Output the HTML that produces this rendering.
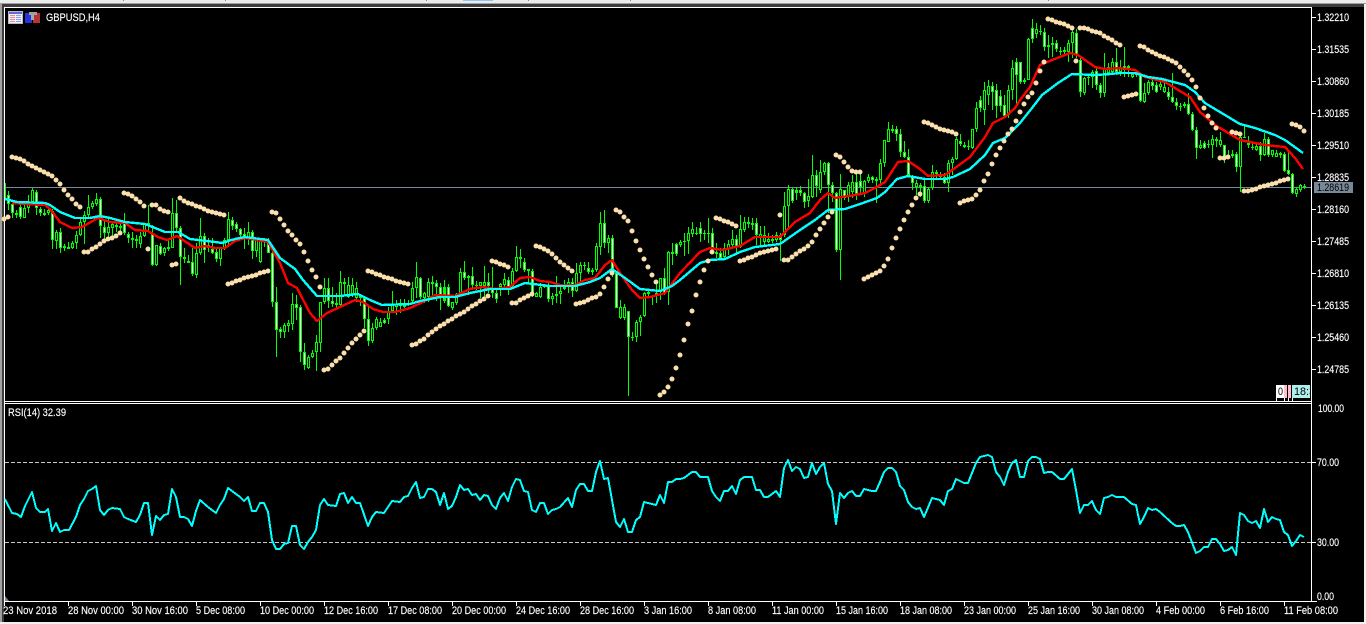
<!DOCTYPE html>
<html>
<head>
<meta charset="utf-8">
<title>GBPUSD,H4</title>
<style>
html,body{margin:0;padding:0;background:#f0f0f0;width:1366px;height:624px;overflow:hidden}
svg{display:block;position:absolute;left:0;top:0}
text{font-family:"Liberation Sans",sans-serif;font-size:11px;fill:#fff;stroke:#fff;stroke-width:.15}
</style>
</head>
<body>
<svg width="1366" height="624" viewBox="0 0 1366 624" xmlns="http://www.w3.org/2000/svg">
<rect x="0" y="0" width="1366" height="624" fill="#f0f0f0"/>
<rect x="0" y="0" width="1366" height="3" fill="#ececec"/>
<rect x="463" y="0" width="30" height="1" fill="#8bc4f5"/>
<g fill="#8a8a8a"><rect x="123" y="0" width="1" height="1"/><rect x="225" y="0" width="1" height="1"/><rect x="426" y="0" width="1" height="1"/><rect x="528" y="0" width="1" height="1"/><rect x="630" y="0" width="1" height="1"/><rect x="1048" y="0" width="1" height="1"/></g>
<rect x="0" y="3" width="1366" height="1" fill="#a0a0a0"/>
<rect x="0" y="4" width="2" height="618" fill="#a0a0a0"/>
<rect x="2" y="4" width="1362" height="3" fill="#3c3c3c"/>
<rect x="2" y="4" width="2" height="618" fill="#3c3c3c"/>
<rect x="4" y="7" width="1360" height="615" fill="#000"/>
<rect x="4" y="7" width="1308" height="1" fill="#fff"/>
<rect x="4" y="7" width="1" height="594" fill="#fff"/>
<rect x="1311" y="7" width="1" height="595" fill="#fff"/>
<rect x="4" y="401" width="1308" height="1" fill="#fff"/>
<rect x="4" y="403" width="1308" height="1" fill="#fff"/>
<rect x="4" y="601" width="1313" height="1" fill="#fff"/>

<!-- icons -->
<rect x="8" y="11" width="15" height="13" fill="#b8b8c8"/>
<rect x="9" y="12" width="13" height="2" fill="#5a6fd0"/>
<rect x="9" y="14" width="13" height="9" fill="#f0f0f8"/>
<g fill="#e88c8c"><rect x="10" y="15" width="5" height="1"/><rect x="10" y="17" width="5" height="1"/><rect x="10" y="19" width="5" height="1"/><rect x="10" y="21" width="5" height="1"/></g>
<g fill="#8c9fe8"><rect x="16" y="15" width="5" height="1"/><rect x="16" y="17" width="5" height="1"/><rect x="16" y="19" width="5" height="1"/><rect x="16" y="21" width="5" height="1"/></g>
<rect x="25" y="13" width="7" height="10" fill="#2434d8"/>
<rect x="33" y="13" width="7" height="10" fill="#b83434"/>
<rect x="29" y="12" width="8" height="3" fill="#a0a0a0"/>
<rect x="31" y="15" width="3" height="5" fill="#a8a8a8"/>
<text x="46" y="21" textLength="54" lengthAdjust="spacingAndGlyphs">GBPUSD,H4</text>
<text x="8" y="416" textLength="58" lengthAdjust="spacingAndGlyphs">RSI(14) 32.39</text>

<!-- current price line -->
<rect x="5" y="187" width="1306" height="1" fill="#778899"/>

<!-- candles -->
<g transform="translate(.5 0)" fill="none" stroke-linecap="butt">
<path stroke="#00ff00" stroke-width="1" d="M5 183V200M8 191V210M12 203V218M16 210V218M20 205V219M24 201V218M28 195V213M32 188V203M36 190V215M40 207V216M44 209V216M48 207V215M52 209V249M56 230V249M60 228V253M64 244V251M68 242V249M72 241V249M76 231V249M80 217V236M84 211V244M88 195V217M92 201V209M96 193V206M100 197V238M104 220V240M108 219V239M112 222V237M116 223V232M120 222V232M124 213V235M128 232V243M132 232V248M136 235V248M140 232V248M144 223V237M148 205V230M152 225V266M156 245V266M160 243V255M164 247V256M168 240V251M172 198V248M176 200V233M180 226V285M184 248V263M188 255V263M192 248V276M196 243V278M200 218V255M204 233V263M208 238V252M212 238V254M216 247V262M220 248V266M224 238V250M228 212V245M232 217V230M236 222V232M240 228V237M244 228V249M248 222V245M252 230V259M256 239V257M260 241V263M264 238V247M268 238V253M272 252V307M276 287V357M280 327V338M284 323V338M288 320V332M292 293V330M296 295V320M300 305V362M304 343V370M308 355V369M312 350V358M316 335V371M320 302V352M324 278V304M328 278V308M332 287V307M336 293V308M340 271V308M344 278V295M348 277V298M352 278V297M356 282V302M360 295V306M364 297V328M368 306V346M372 323V343M376 317V330M380 318V327M384 318V324M388 307V324M392 291V312M396 300V315M400 299V313M404 299V308M408 300V306M412 282V302M416 262V298M420 277V299M424 292V303M428 278V302M432 276V295M436 280V301M440 283V310M444 280V303M448 284V307M452 302V310M456 293V305M460 268V295M464 261V280M468 275V295M472 267V288M476 281V290M480 282V298M484 266V297M488 273V293M492 267V298M496 290V303M500 283V296M504 273V288M508 277V295M512 268V287M516 246V272M520 249V268M524 258V272M528 269V283M532 269V297M536 292V297M540 283V298M544 284V288M548 282V302M552 293V305M556 276V303M560 287V304M564 280V290M568 278V293M572 278V297M576 263V292M580 262V282M584 262V270M588 262V274M592 268V275M596 243V272M600 212V255M604 210V248M608 235V253M612 235V277M616 272V308M620 300V319M624 304V320M628 311V396M632 332V341M636 320V342M640 315V336M644 292V317M648 290V297M652 295V305M656 280V303M660 278V300M664 268V295M668 251V305M672 243V265M676 243V256M680 240V247M684 233V256M688 227V254M692 222V237M696 227V235M700 222V242M704 230V240M708 218V243M712 228V250M716 243V258M720 248V259M724 243V259M728 240V255M732 230V248M736 235V255M740 215V248M744 217V232M748 217V228M752 218V230M756 218V245M760 226V247M764 226V247M768 233V243M772 235V243M776 232V242M780 233V261M784 192V237M788 185V230M792 187V203M796 187V200M800 186V196M804 192V208M808 179V207M812 155V198M816 170V197M820 160V193M824 162V175M828 162V213M832 182V202M836 192V252M840 174V280M844 190V200M848 182V202M852 175V198M856 173V200M860 173V195M864 180V197M868 174V183M872 176V183M876 177V203M880 159V185M884 140V167M888 122V142M892 125V133M896 126V141M900 129V157M904 141V158M908 149V175M912 175V190M916 180V195M920 183V197M924 180V203M928 187V203M932 165V190M936 170V178M940 172V180M944 173V184M948 160V192M952 157V175M956 137V160M960 134V146M964 142V148M968 140V150M972 129V149M976 102V132M980 96V112M984 82V125M988 80V105M992 82V110M996 84V118M1000 90V112M1004 95V118M1008 85V118M1012 60V100M1016 58V105M1020 62V84M1024 78V84M1028 38V80M1032 19V43M1036 23V38M1040 25V35M1044 28V51M1048 35V58M1052 37V57M1056 40V52M1060 47V55M1064 47V55M1068 40V62M1072 28V58M1076 29V58M1080 58V97M1084 77V95M1088 75V85M1092 70V88M1096 68V90M1100 83V98M1104 53V97M1108 63V75M1112 58V75M1116 48V75M1120 60V76M1124 47V77M1128 65V77M1132 72V78M1136 72V77M1140 74V102M1144 83V103M1148 80V95M1152 80V90M1156 82V93M1160 80V90M1164 82V93M1168 87V100M1172 73V103M1176 98V110M1180 103V111M1184 102V108M1188 93V115M1192 112V131M1196 127V159M1200 140V149M1204 141V149M1208 140V148M1212 135V158M1216 137V147M1220 132V147M1224 145V163M1228 150V157M1232 150V158M1236 152V172M1240 135V192M1244 126V138M1248 136V148M1252 143V150M1256 143V151M1260 142V161M1264 133V156M1268 137V157M1272 150V157M1276 150V157M1280 152V158M1284 152V172M1288 152V175M1292 173V194M1296 187V197M1300 184V192M1304 184V189"/>
<path stroke="#00ff00" stroke-width="3" d="M8 195V204M12 204V213M16 213V215M20 207V217M24 208V218M28 202V208M32 190V202M36 192V208M40 209V213M44 213V215M48 210V213M52 211V240M56 232V241M60 232V248M64 246V248M68 247V249M72 243V248M76 235V243M80 222V235M84 215V222M88 207V215M92 203V207M96 199V204M100 199V226M104 227V233M108 227V233M112 224V228M116 225V227M120 226V228M124 223V233M128 234V238M132 238V240M136 239V241M140 236V244M144 224V236M148 223V225M152 233V265M156 245V265M160 246V254M164 248V253M168 247V249M172 213V248M176 213V228M180 228V257M184 257V259M188 261V263M192 262V274M196 253V275M200 236V253M204 236V250M208 245V248M212 249V253M216 252V259M220 248V259M224 240V248M228 219V240M232 220V226M236 224V229M240 229V235M244 234V237M248 232V238M252 232V251M256 240V251M260 241V262M264 239V241M268 242V253M272 253V302M276 302V330M280 329V332M284 325V332M288 323V326M292 304V324M296 304V308M300 307V352M304 352V365M308 357V368M312 353V357M316 342V352M320 302V343M324 288V302M328 288V301M332 301V304M336 303V305M340 282V305M344 282V284M348 285V297M352 285V294M356 288V298M360 296V298M364 298V319M368 319V341M372 328V341M376 319V328M380 322V327M384 320V323M388 312V319M392 304V311M396 304V307M400 304V306M404 305V307M408 303V305M412 288V301M416 277V288M420 278V297M424 293V298M428 282V297M432 282V284M436 283V287M440 287V297M444 287V301M448 287V306M452 302V308M456 294V303M460 272V293M464 272V278M468 276V278M472 276V285M476 285V286M480 282V286M484 282V286M488 282V286M492 289V293M496 293V299M500 284V287M504 279V285M508 280V287M512 271V286M516 257V271M520 257V259M524 262V270M528 269V271M532 271V293M536 293V297M540 287V297M544 285V287M548 286V299M552 296V299M556 294V296M560 291V294M564 287V289M568 282V287M572 282V291M576 273V291M580 265V273M584 265V266M588 268V272M592 270V272M596 246V270M600 223V247M604 223V243M608 238V243M612 238V272M616 273V308M620 307V318M624 307V318M628 311V337M632 337V338M636 322V337M640 317V322M644 293V316M648 292V294M652 296V297M656 293V296M660 278V292M664 278V293M668 252V292M672 252V254M676 244V254M680 242V245M684 241V242M688 233V241M692 229V234M696 233V234M700 228V234M704 233V234M708 233V234M712 233V248M716 252V254M720 253V258M724 248V257M728 244V249M732 239V245M736 239V247M740 229V247M744 222V230M748 222V224M752 223V225M756 223V235M760 234V238M764 235V242M768 239V242M772 239V241M776 235V240M780 235V240M784 206V235M788 189V206M792 189V201M796 190V193M800 190V193M804 193V202M808 196V201M812 175V197M816 175V186M820 172V190M824 163V172M828 163V185M832 185V193M836 193V250M840 189V250M844 190V198M848 185V197M852 182V192M856 182V194M860 181V187M864 181V193M868 177V181M872 177V180M876 179V181M880 163V180M884 140V163M888 129V142M892 129V131M896 129V134M900 134V152M904 152V157M908 157V175M912 177V183M916 183V187M920 185V187M924 186V201M928 189V201M932 172V188M936 172V174M940 174V177M944 177V183M948 163V183M952 159V163M956 139V159M960 141V144M964 145V147M968 146V147M972 129V148M976 108V129M980 100V108M984 90V110M988 86V95M992 86V92M996 90V106M1000 96V106M1004 105V116M1008 90V115M1012 68V90M1016 62V75M1020 62V82M1024 80V82M1028 39V80M1032 28V39M1036 29V34M1040 31V32M1044 32V47M1048 45V47M1052 43V45M1056 43V49M1060 51V52M1064 50V52M1068 43V52M1072 32V43M1076 33V55M1080 60V92M1084 78V93M1088 77V78M1092 72V77M1096 71V85M1100 85V93M1104 68V93M1108 67V73M1112 62V72M1116 62V72M1120 67V72M1124 66V70M1128 66V69M1132 74V77M1136 74V75M1140 75V101M1144 93V102M1148 82V93M1152 82V86M1156 85V92M1160 84V87M1164 87V92M1168 92V97M1172 97V102M1176 102V106M1180 106V107M1184 104V106M1188 104V114M1192 114V130M1196 130V148M1200 145V148M1204 143V148M1208 144V145M1212 139V145M1216 139V141M1220 140V145M1224 145V157M1228 155V157M1232 154V156M1236 154V167M1240 137V167M1244 137V138M1248 143V145M1252 147V148M1256 146V150M1260 146V155M1264 139V155M1268 139V155M1272 150V155M1276 153V157M1280 153V155M1284 154V171M1288 170V174M1292 174V193M1296 189V194M1300 185V190M1304 186V187"/>
<path stroke="#fff" stroke-width="1" d="M8 196V203M12 205V212M20 208V216M36 193V207M40 210V212M52 212V239M60 233V247M100 200V225M104 228V232M124 224V232M128 235V237M152 234V264M160 247V253M176 214V227M180 229V256M192 263V273M204 237V249M208 246V247M212 250V252M216 253V258M232 221V225M236 225V228M240 230V234M244 235V236M252 233V250M268 243V252M272 254V301M276 303V329M280 330V331M296 305V307M300 308V351M304 353V364M328 289V300M332 302V303M344 283V283M364 299V318M368 320V340M384 321V322M420 279V296M436 284V286M440 288V296M448 288V305M464 273V277M472 277V284M488 283V285M492 290V292M496 294V298M508 281V286M520 258V258M524 263V269M532 272V292M548 287V298M564 288V288M572 283V290M588 269V271M604 224V242M612 239V271M616 274V307M628 312V336M664 279V292M676 245V253M700 229V233M712 234V247M716 253V253M720 254V257M736 240V246M748 223V223M756 224V234M780 236V239M792 190V200M800 191V192M804 194V201M816 176V185M828 164V184M832 186V192M836 194V249M844 191V197M856 183V193M860 182V186M872 178V179M896 130V133M900 135V151M904 153V156M908 158V174M912 178V182M924 187V200M944 178V182M960 142V143M980 101V107M992 87V91M996 91V105M1000 97V105M1004 106V115M1016 63V74M1020 63V81M1032 29V38M1044 33V46M1056 44V48M1076 34V54M1080 61V91M1096 72V84M1100 86V92M1116 63V71M1124 67V69M1140 76V100M1152 83V85M1156 86V91M1168 93V96M1172 98V101M1176 103V105M1188 105V113M1192 115V129M1196 131V147M1204 144V147M1224 146V156M1236 155V166M1260 147V154M1268 140V154M1284 155V170M1288 171V173M1292 175V192"/>
<path stroke="#000" stroke-width="1" d="M24 209V217M28 203V207M32 191V201M48 211V212M56 233V240M72 244V247M76 236V242M80 223V234M84 216V221M88 208V214M92 204V206M96 200V203M108 228V232M112 225V227M140 237V243M144 225V235M156 246V264M164 249V252M172 214V247M196 254V274M200 237V252M220 249V258M224 241V247M228 220V239M248 233V237M256 241V250M260 242V261M284 326V331M288 324V325M292 305V323M308 358V367M312 354V356M316 343V351M320 303V342M324 289V301M340 283V304M348 286V296M352 286V293M356 289V297M372 329V340M376 320V327M380 323V326M388 313V318M392 305V310M396 305V306M412 289V300M416 278V287M424 294V297M428 283V296M452 303V307M456 295V302M460 273V292M480 283V285M484 283V285M500 285V286M504 280V284M512 272V285M516 258V270M536 294V296M540 288V296M552 297V298M560 292V293M568 283V286M576 274V290M580 266V272M596 247V269M600 224V246M608 239V242M620 308V317M624 308V317M636 323V336M640 318V321M644 294V315M656 294V295M660 279V291M668 253V291M680 243V244M688 234V240M692 230V233M724 249V256M728 245V248M732 240V244M740 230V246M744 223V229M760 235V237M764 236V241M768 240V241M776 236V239M784 207V234M788 190V205M808 197V200M812 176V196M820 173V189M824 164V171M840 190V249M848 186V196M852 183V191M864 182V192M868 178V180M880 164V179M884 141V162M888 130V141M916 184V186M928 190V200M932 173V187M940 175V176M948 164V182M952 160V162M956 140V158M972 130V147M976 109V128M984 91V109M988 87V94M1008 91V114M1012 69V89M1028 40V79M1036 30V33M1068 44V51M1072 33V42M1084 79V92M1092 73V76M1104 69V92M1108 68V72M1112 63V71M1120 68V71M1132 75V76M1144 94V101M1148 83V92M1160 85V86M1164 88V91M1200 146V147M1212 140V144M1220 141V144M1240 138V166M1256 147V149M1264 140V154M1272 151V154M1276 154V156M1296 190V193M1300 186V189"/>
</g>

<!-- moving averages -->
<polyline fill="none" stroke="#ff0000" stroke-width="2.4" stroke-linejoin="round" shape-rendering="crispEdges" points="12,203 25,204 45,205 50,209 60,222 72,228 82,227 98,218 110,222 125,223 135,230 148,231 158,237 167,240 177,236 195,248 205,246 215,248 225,248 235,241 245,238 268,242 280,263 288,283 297,288 310,313 317,321 327,313 340,307 355,300 363,302 373,309 383,312 395,312 410,308 425,301 435,295 455,296 470,289 483,287 495,289 510,287 520,278 530,277 540,281 550,282 560,285 575,285 585,280 595,278 605,265 612,260 620,273 632,290 640,298 650,297 665,293 680,273 700,252 710,248 722,250 740,246 755,237 770,237 780,237 795,222 810,213 820,200 828,193 835,198 855,195 865,193 875,188 885,182 898,162 908,161 920,169 928,176 945,175 955,168 970,157 985,137 993,123 1005,117 1015,108 1020,100 1030,87 1040,65 1052,60 1070,53 1078,55 1095,67 1105,69 1120,68 1135,70 1145,77 1165,82 1190,97 1200,112 1215,125 1240,140 1250,142 1265,145 1285,147 1295,158 1303,169"/>
<polyline fill="none" stroke="#00ffff" stroke-width="2.4" stroke-linejoin="round" shape-rendering="crispEdges" points="5,199 17,202 45,203 50,205 60,212 75,218 90,218 100,216 110,218 125,222 145,224 165,232 178,232 190,239 215,242 222,243 235,239 245,237 268,240 280,258 295,269 303,280 317,296 340,296 358,294 370,300 382,305 410,304 420,301 440,297 455,297 470,293 490,289 510,289 525,283 550,286 575,286 590,282 600,278 612,269 625,278 640,289 660,291 672,286 680,280 700,263 710,260 725,259 740,252 755,247 780,244 800,230 815,220 828,210 845,209 860,204 877,198 885,192 897,179 908,176 925,179 945,179 953,177 970,169 985,155 993,143 1005,138 1020,123 1032,108 1042,95 1058,83 1072,74 1095,75 1110,74 1120,73 1135,73 1148,77 1162,79 1185,85 1195,92 1205,103 1225,115 1240,124 1255,128 1275,135 1285,140 1303,153"/>

<!-- parabolic SAR -->
<path fill="none" stroke="#fbe0ae" stroke-width="5" stroke-linecap="round" d="M4 219h0M8 217h0M12 157h0M16 158h0M20 159h0M24 161h0M28 164h0M32 166h0M36 168h0M40 170h0M44 172h0M48 174h0M52 176h0M56 180h0M60 184h0M64 190h0M68 195h0M72 199h0M76 204h0M80 207h0M84 252h0M88 252h0M92 249h0M96 247h0M100 244h0M104 241h0M108 239h0M112 238h0M116 236h0M120 233h0M124 193h0M128 194h0M132 196h0M136 199h0M140 202h0M144 206h0M148 249h0M152 205h0M156 205h0M160 209h0M164 211h0M168 212h0M172 265h0M176 264h0M180 198h0M184 201h0M188 203h0M192 204h0M196 206h0M200 207h0M204 209h0M208 211h0M212 212h0M216 213h0M220 214h0M224 215h0M228 284h0M232 283h0M236 281h0M240 280h0M244 278h0M248 277h0M252 276h0M256 275h0M260 273h0M264 272h0M268 271h0M272 212h0M276 213h0M280 219h0M284 225h0M288 231h0M292 235h0M296 240h0M300 244h0M304 252h0M308 261h0M312 270h0M316 277h0M320 287h0M324 370h0M328 369h0M332 365h0M336 361h0M340 358h0M344 353h0M348 348h0M352 343h0M356 339h0M360 335h0M364 331h0M368 271h0M372 272h0M376 274h0M380 275h0M384 277h0M388 278h0M392 279h0M396 281h0M400 282h0M404 283h0M408 284h0M412 345h0M416 344h0M420 341h0M424 339h0M428 335h0M432 332h0M436 329h0M440 326h0M444 324h0M448 321h0M452 319h0M456 316h0M460 314h0M464 312h0M468 309h0M472 306h0M476 304h0M480 301h0M484 299h0M488 296h0M492 261h0M496 262h0M500 264h0M504 265h0M508 267h0M512 303h0M516 303h0M520 300h0M524 298h0M528 296h0M532 294h0M536 246h0M540 247h0M544 249h0M548 251h0M552 254h0M556 258h0M560 262h0M564 265h0M568 268h0M572 271h0M576 304h0M580 303h0M584 302h0M588 300h0M592 298h0M596 297h0M600 294h0M604 287h0M608 279h0M612 273h0M616 210h0M620 212h0M624 217h0M628 221h0M632 231h0M636 241h0M640 250h0M644 259h0M648 267h0M652 275h0M656 282h0M660 395h0M664 392h0M668 387h0M672 379h0M676 368h0M680 355h0M684 340h0M688 324h0M692 311h0M696 295h0M700 282h0M704 270h0M708 261h0M712 252h0M716 218h0M720 219h0M724 221h0M728 222h0M732 224h0M736 226h0M740 261h0M744 260h0M748 258h0M752 257h0M756 255h0M760 253h0M764 252h0M768 251h0M772 250h0M776 249h0M780 215h0M784 260h0M788 260h0M792 257h0M796 254h0M800 251h0M804 249h0M808 246h0M812 242h0M816 235h0M820 229h0M824 223h0M828 217h0M832 212h0M836 155h0M840 157h0M844 162h0M848 167h0M852 171h0M856 172h0M860 172h0M864 279h0M868 277h0M872 275h0M876 273h0M880 271h0M884 266h0M888 259h0M892 248h0M896 238h0M900 229h0M904 220h0M908 212h0M912 205h0M916 198h0M920 194h0M924 122h0M928 123h0M932 125h0M936 127h0M940 129h0M944 130h0M948 131h0M952 132h0M956 134h0M960 203h0M964 201h0M968 200h0M972 199h0M976 195h0M980 190h0M984 181h0M988 174h0M992 164h0M996 155h0M1000 148h0M1004 141h0M1008 134h0M1012 129h0M1016 121h0M1020 112h0M1024 104h0M1028 97h0M1032 93h0M1036 83h0M1040 71h0M1044 62h0M1048 19h0M1052 20h0M1056 22h0M1060 23h0M1064 24h0M1068 26h0M1072 28h0M1076 61h0M1080 28h0M1084 28h0M1088 29h0M1092 31h0M1096 32h0M1100 33h0M1104 36h0M1108 38h0M1112 40h0M1116 43h0M1120 45h0M1124 97h0M1128 96h0M1132 95h0M1136 94h0M1140 46h0M1144 47h0M1148 50h0M1152 52h0M1156 54h0M1160 56h0M1164 57h0M1168 59h0M1172 61h0M1176 63h0M1180 67h0M1184 71h0M1188 75h0M1192 80h0M1196 87h0M1200 98h0M1204 108h0M1208 116h0M1212 123h0M1216 128h0M1220 158h0M1224 158h0M1228 157h0M1232 132h0M1236 133h0M1240 134h0M1244 191h0M1248 191h0M1252 190h0M1256 189h0M1260 187h0M1264 186h0M1268 185h0M1272 184h0M1276 183h0M1280 181h0M1284 180h0M1288 179h0M1292 124h0M1296 125h0M1300 127h0M1304 131h0"/>

<!-- price axis -->
<g fill="#fff">
<rect x="1312" y="17" width="4" height="1"/><rect x="1312" y="49" width="4" height="1"/><rect x="1312" y="81" width="4" height="1"/><rect x="1312" y="113" width="4" height="1"/><rect x="1312" y="145" width="4" height="1"/><rect x="1312" y="177" width="4" height="1"/><rect x="1312" y="209" width="4" height="1"/><rect x="1312" y="241" width="4" height="1"/><rect x="1312" y="273" width="4" height="1"/><rect x="1312" y="305" width="4" height="1"/><rect x="1312" y="337" width="4" height="1"/><rect x="1312" y="369" width="4" height="1"/>
<rect x="1312" y="462" width="4" height="1"/><rect x="1312" y="542" width="4" height="1"/>
</g>
<text x="1317" y="21" textLength="32" lengthAdjust="spacingAndGlyphs">1.32210</text>
<text x="1317" y="53" textLength="32" lengthAdjust="spacingAndGlyphs">1.31535</text>
<text x="1317" y="85" textLength="32" lengthAdjust="spacingAndGlyphs">1.30860</text>
<text x="1317" y="117" textLength="32" lengthAdjust="spacingAndGlyphs">1.30185</text>
<text x="1317" y="149" textLength="32" lengthAdjust="spacingAndGlyphs">1.29510</text>
<text x="1317" y="181" textLength="32" lengthAdjust="spacingAndGlyphs">1.28835</text>
<text x="1317" y="213" textLength="32" lengthAdjust="spacingAndGlyphs">1.28160</text>
<text x="1317" y="245" textLength="32" lengthAdjust="spacingAndGlyphs">1.27485</text>
<text x="1317" y="277" textLength="32" lengthAdjust="spacingAndGlyphs">1.26810</text>
<text x="1317" y="309" textLength="32" lengthAdjust="spacingAndGlyphs">1.26135</text>
<text x="1317" y="341" textLength="32" lengthAdjust="spacingAndGlyphs">1.25460</text>
<text x="1317" y="373" textLength="32" lengthAdjust="spacingAndGlyphs">1.24785</text>
<rect x="1314" y="182" width="39" height="11" fill="#778899"/>
<text x="1317" y="191" textLength="32" lengthAdjust="spacingAndGlyphs" style="fill:#000;stroke:none">1.28619</text>

<!-- trade boxes -->
<rect x="1276" y="385" width="8" height="13" fill="#fff"/>
<text x="1278" y="395" textLength="5" lengthAdjust="spacingAndGlyphs" style="fill:#000;stroke:none">0</text>
<rect x="1284" y="385" width="3" height="13" fill="#ffc0cb"/>
<rect x="1288" y="385" width="3" height="13" fill="#ffc0cb"/>
<rect x="1292" y="385" width="18" height="13" fill="#afeeee"/>
<svg x="1292" y="385" width="18" height="13"><text x="2" y="10" textLength="21" lengthAdjust="spacingAndGlyphs" style="fill:#000;stroke:none">18:3</text></svg>
<g fill="#fff"><rect x="1276" y="398" width="1" height="3"/><rect x="1284" y="398" width="1" height="3"/><rect x="1288" y="398" width="1" height="3"/><rect x="1292" y="398" width="1" height="3"/></g>

<!-- RSI -->
<path stroke="#c8c8c8" stroke-width="1" stroke-dasharray="4 2" fill="none" d="M5 462.5H1311M5 542.5H1311"/>
<polygon points="5,596 9,601 5,601" fill="#778899"/>
<polyline fill="none" stroke="#00ffff" stroke-width="2" stroke-linejoin="round" shape-rendering="crispEdges" points="5,499 12,513 17,514 21,517 25,506 32,492 36,508 40,512 45,512 48,509 52,531 56,523 60,532 64,530 69,530 76,517 80,505 84,499 88,491 92,489 96,486 100,510 104,515 108,510 112,508 120,509 124,517 128,519 136,522 140,515 144,503 148,503 152,535 156,516 160,520 164,515 168,514 172,489 176,497 180,517 184,517 188,519 192,526 196,511 200,500 208,507 216,513 220,505 224,499 228,488 232,491 240,497 244,501 248,497 252,511 256,511 260,503 264,503 268,512 272,540 276,549 280,549 284,544 288,543 292,526 296,526 300,545 304,549 308,542 312,537 316,530 320,505 324,499 328,505 336,506 340,494 344,493 348,503 352,497 356,503 360,503 368,526 372,517 376,512 384,513 392,501 400,502 404,497 408,496 412,488 416,482 420,498 424,497 428,489 432,489 436,492 440,505 444,493 448,509 452,506 456,497 460,485 464,490 468,489 472,495 476,494 480,500 484,495 488,496 492,505 496,509 500,498 504,493 508,501 512,487 516,479 520,480 524,491 528,492 532,510 536,512 540,503 544,503 548,514 552,510 556,509 560,507 568,498 572,507 576,490 580,484 584,484 588,491 592,491 596,472 600,461 604,479 608,478 612,500 616,522 620,527 624,519 628,532 632,532 636,520 640,517 644,502 656,505 660,495 664,503 668,482 672,482 676,479 680,479 684,478 692,472 696,472 700,477 708,477 712,491 716,497 720,501 724,491 728,491 732,486 736,494 740,480 744,477 752,477 756,490 760,490 764,497 768,497 772,494 776,491 780,497 784,468 788,460 792,471 796,467 800,469 804,478 808,477 812,463 816,474 820,467 824,463 828,484 832,491 836,524 840,493 844,498 848,493 852,491 856,496 860,496 864,489 872,491 876,491 880,482 884,472 888,468 892,468 896,472 900,486 904,490 908,502 912,507 916,509 920,508 924,517 932,498 936,499 940,500 944,505 948,491 952,489 956,479 960,481 964,483 968,483 972,473 976,463 980,457 988,455 992,457 996,472 1000,477 1004,485 1008,472 1012,463 1016,460 1020,477 1024,477 1028,461 1032,457 1036,457 1040,459 1044,473 1048,472 1052,472 1060,479 1064,479 1072,469 1076,490 1080,513 1084,505 1088,505 1092,501 1096,510 1100,514 1104,498 1108,497 1112,495 1116,497 1124,497 1132,504 1136,505 1140,524 1144,517 1148,508 1152,510 1156,509 1160,512 1172,523 1176,526 1180,526 1184,525 1188,532 1196,553 1200,551 1204,547 1208,547 1212,539 1216,539 1220,544 1224,551 1228,550 1232,547 1236,555 1240,513 1244,515 1248,521 1252,523 1256,521 1260,528 1264,509 1268,522 1272,517 1276,519 1280,520 1284,532 1288,535 1292,546 1296,541 1300,535 1304,537"/>
<text x="1318" y="412" textLength="26" lengthAdjust="spacingAndGlyphs">100.00</text>
<text x="1317" y="466" textLength="22" lengthAdjust="spacingAndGlyphs">70.00</text>
<text x="1317" y="546" textLength="22" lengthAdjust="spacingAndGlyphs">30.00</text>
<text x="1317" y="600" textLength="17" lengthAdjust="spacingAndGlyphs">0.00</text>

<!-- time axis -->
<g fill="#fff"><rect x="4" y="602" width="1" height="4"/><rect x="68" y="602" width="1" height="4"/><rect x="132" y="602" width="1" height="4"/><rect x="196" y="602" width="1" height="4"/><rect x="260" y="602" width="1" height="4"/><rect x="324" y="602" width="1" height="4"/><rect x="388" y="602" width="1" height="4"/><rect x="452" y="602" width="1" height="4"/><rect x="516" y="602" width="1" height="4"/><rect x="580" y="602" width="1" height="4"/><rect x="644" y="602" width="1" height="4"/><rect x="708" y="602" width="1" height="4"/><rect x="772" y="602" width="1" height="4"/><rect x="836" y="602" width="1" height="4"/><rect x="900" y="602" width="1" height="4"/><rect x="964" y="602" width="1" height="4"/><rect x="1028" y="602" width="1" height="4"/><rect x="1092" y="602" width="1" height="4"/><rect x="1156" y="602" width="1" height="4"/><rect x="1220" y="602" width="1" height="4"/><rect x="1284" y="602" width="1" height="4"/></g>
<text x="3" y="614" textLength="54" lengthAdjust="spacingAndGlyphs">23 Nov 2018</text>
<text x="68" y="614" textLength="56" lengthAdjust="spacingAndGlyphs">28 Nov 00:00</text>
<text x="132" y="614" textLength="56" lengthAdjust="spacingAndGlyphs">30 Nov 16:00</text>
<text x="196" y="614" textLength="49" lengthAdjust="spacingAndGlyphs">5 Dec 08:00</text>
<text x="260" y="614" textLength="54" lengthAdjust="spacingAndGlyphs">10 Dec 00:00</text>
<text x="324" y="614" textLength="54" lengthAdjust="spacingAndGlyphs">12 Dec 16:00</text>
<text x="388" y="614" textLength="54" lengthAdjust="spacingAndGlyphs">17 Dec 08:00</text>
<text x="452" y="614" textLength="54" lengthAdjust="spacingAndGlyphs">20 Dec 00:00</text>
<text x="516" y="614" textLength="54" lengthAdjust="spacingAndGlyphs">24 Dec 16:00</text>
<text x="580" y="614" textLength="54" lengthAdjust="spacingAndGlyphs">28 Dec 16:00</text>
<text x="644" y="614" textLength="48" lengthAdjust="spacingAndGlyphs">3 Jan 16:00</text>
<text x="708" y="614" textLength="48" lengthAdjust="spacingAndGlyphs">8 Jan 08:00</text>
<text x="772" y="614" textLength="52" lengthAdjust="spacingAndGlyphs">11 Jan 00:00</text>
<text x="836" y="614" textLength="52" lengthAdjust="spacingAndGlyphs">15 Jan 16:00</text>
<text x="900" y="614" textLength="52" lengthAdjust="spacingAndGlyphs">18 Jan 08:00</text>
<text x="964" y="614" textLength="52" lengthAdjust="spacingAndGlyphs">23 Jan 00:00</text>
<text x="1028" y="614" textLength="52" lengthAdjust="spacingAndGlyphs">25 Jan 16:00</text>
<text x="1092" y="614" textLength="52" lengthAdjust="spacingAndGlyphs">30 Jan 08:00</text>
<text x="1156" y="614" textLength="49" lengthAdjust="spacingAndGlyphs">4 Feb 00:00</text>
<text x="1220" y="614" textLength="49" lengthAdjust="spacingAndGlyphs">6 Feb 16:00</text>
<text x="1284" y="614" textLength="54" lengthAdjust="spacingAndGlyphs">11 Feb 08:00</text>
</svg>
</body>
</html>
